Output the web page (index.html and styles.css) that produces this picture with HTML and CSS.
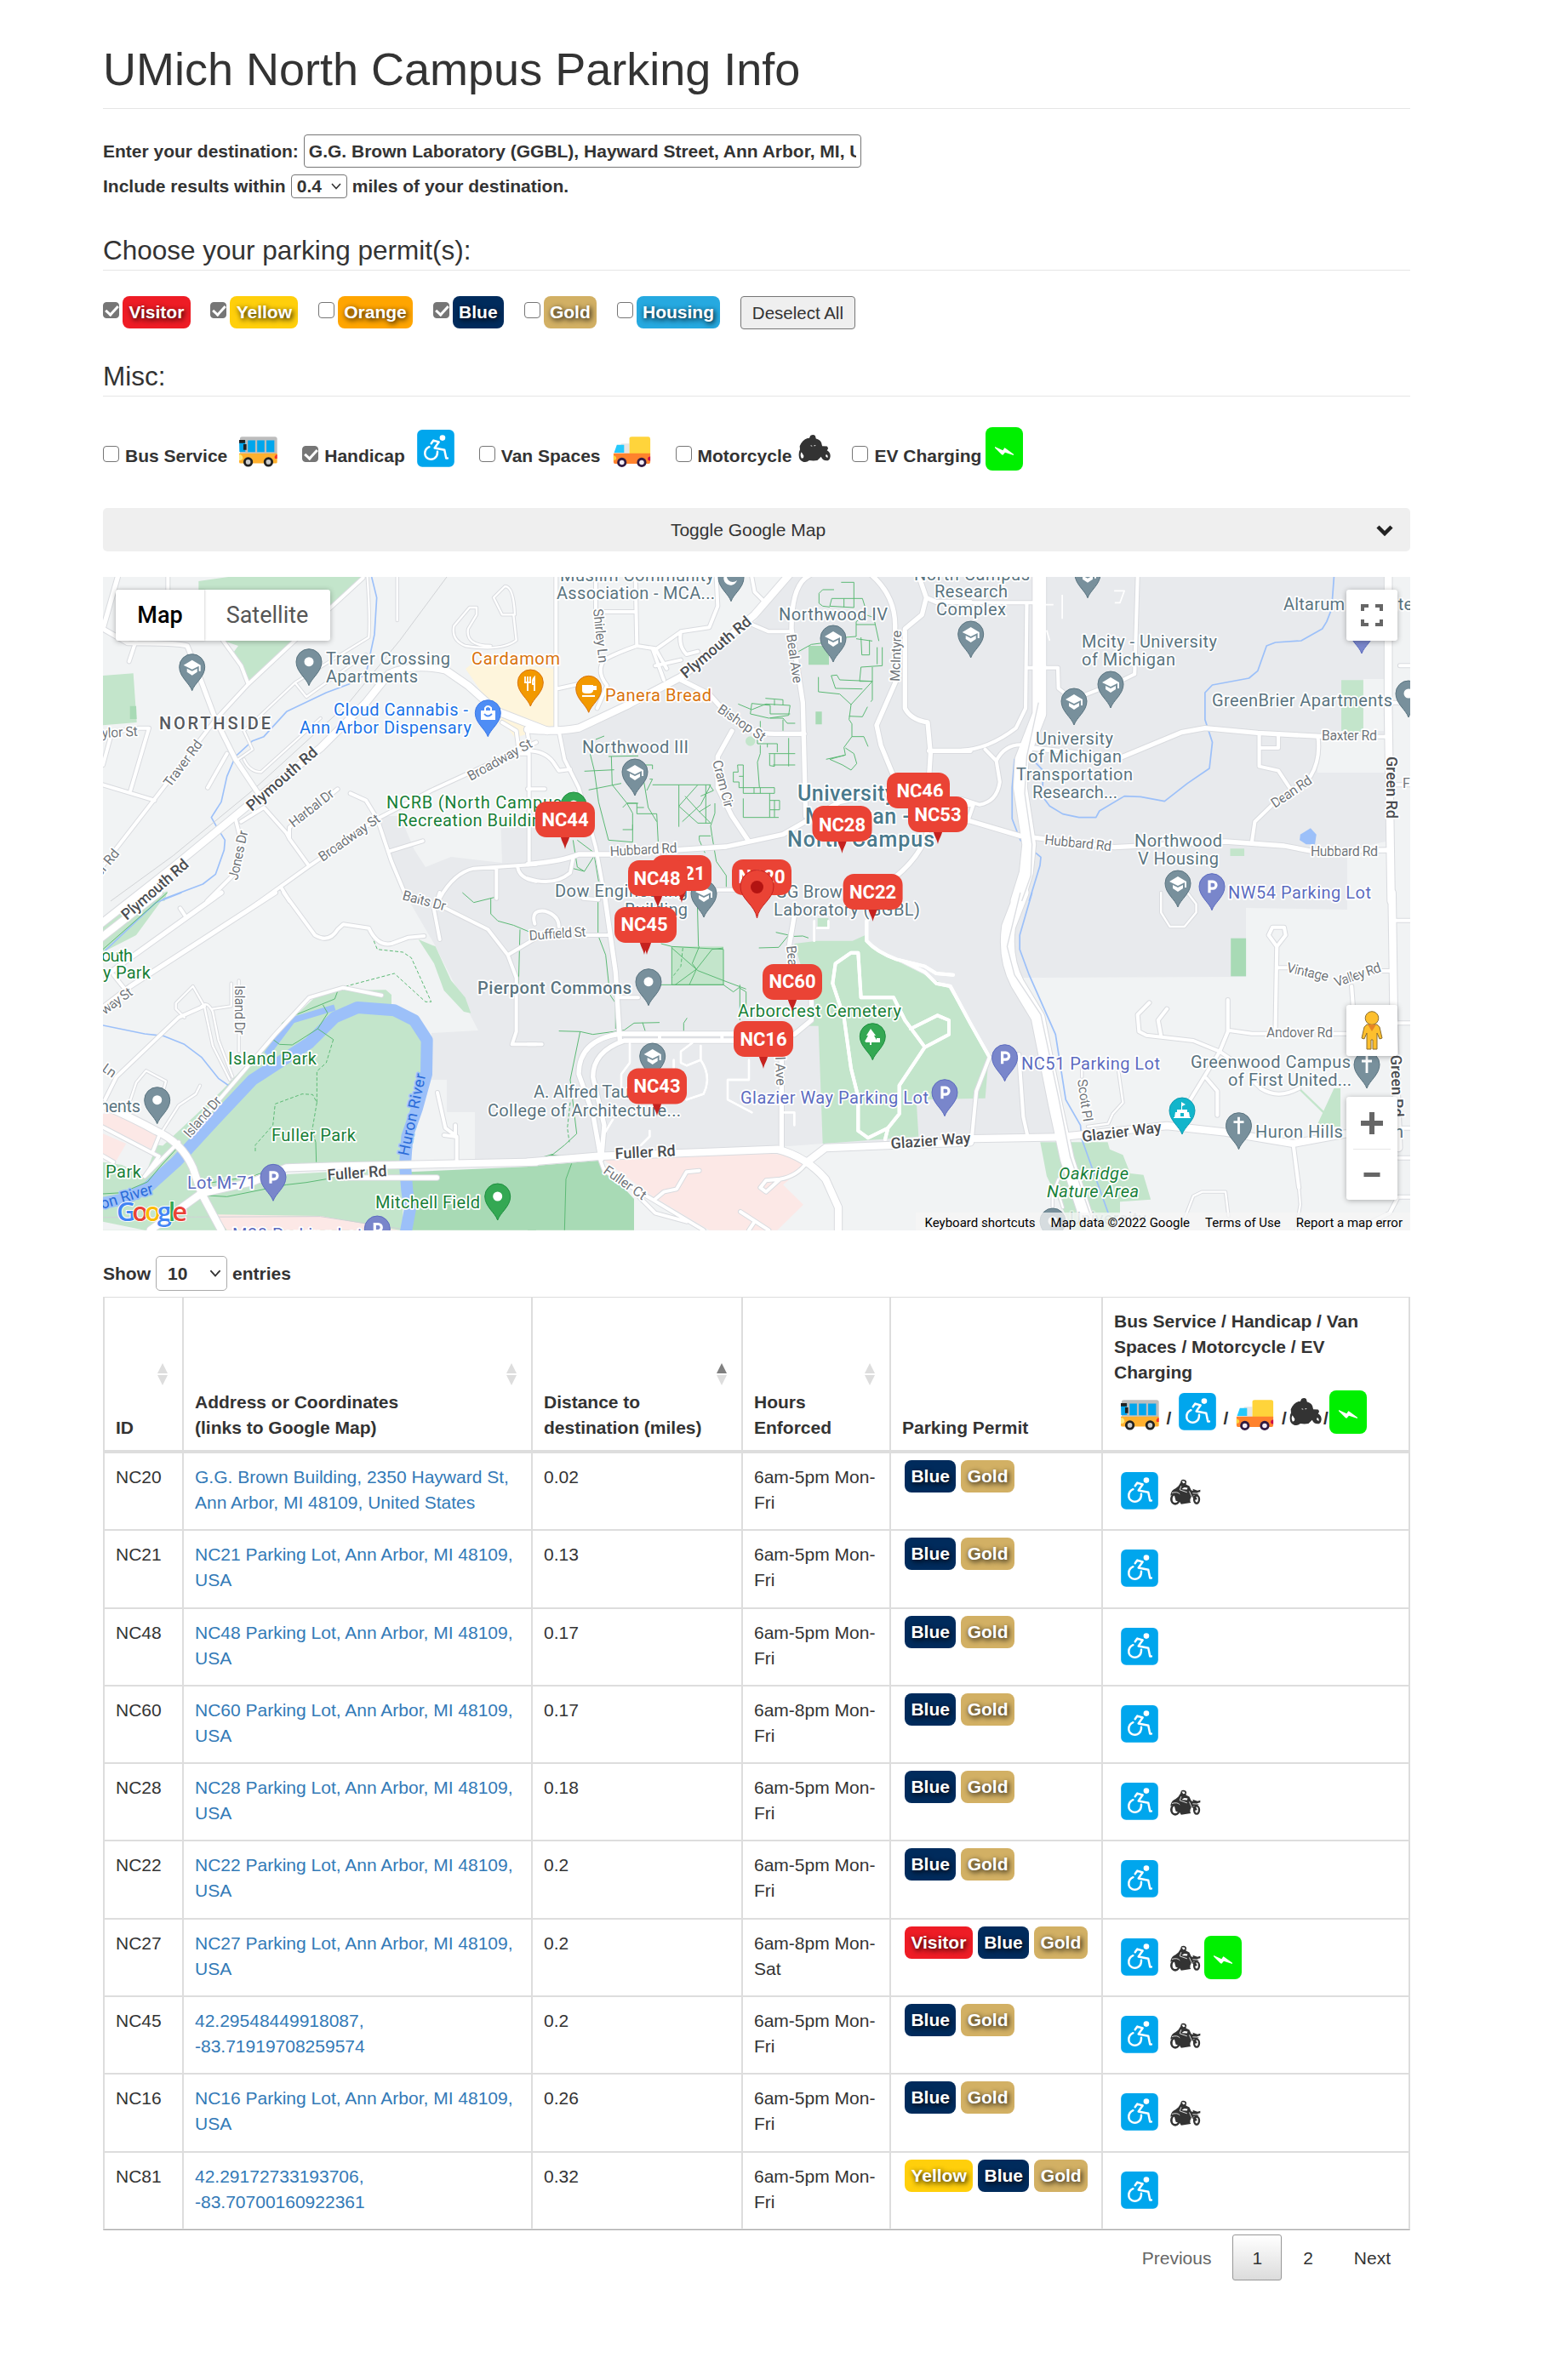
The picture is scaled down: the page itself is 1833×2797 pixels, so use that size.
FILE: index.html
```html
<!DOCTYPE html>
<html lang="en">
<head>
<meta charset="utf-8">
<title>UMich North Campus Parking Info</title>
<link rel="stylesheet" href="styles.css">
</head>
<body>
<svg class="defs" width="0" height="0" aria-hidden="true">
  <symbol id="bus" viewBox="33 53 136 108"><path fill="#bdbdbd" d="M36 112V60q0-7 8-7h116q8 0 8 8v52z"/><path fill="#ffb02e" d="M33 112h135v32q0 4-5 4H38q-5 0-5-5z"/><path fill="#00a6ed" d="M33 66h22v41H34zM64 66h26v42H64zM97 66h26v42H97zM130 66h28v42h-28z"/><path fill="#212121" d="M33 65h21v11H33zM48 80h11v20H48z"/><path fill="#ffe97a" d="M33 117h6q7 5 7 12t-8 8h-5z"/><path fill="#f8312f" d="M168 117h-4q-7 7-4 14h8z"/><circle cx="65" cy="143" r="17" fill="#212121"/><circle cx="137" cy="143" r="17" fill="#212121"/><circle cx="65" cy="143" r="8.500" fill="#ccc"/><circle cx="137" cy="143" r="8.500" fill="#ccc"/></symbol>
  <symbol id="access" viewBox="237 27 132 133"><rect x="237" y="27" width="132" height="132" rx="18" fill="#00a6ed"/><circle cx="327" cy="56" r="10" fill="#fff"/><path fill="none" stroke="#fff" stroke-width="7.500" stroke-linecap="round" stroke-linejoin="round" d="M287 76l8-11 19 6-15 21q20 4 35 7l6 29h5M280 88c-20 9-20 35-3 42 17 7 33-5 32-25"/></symbol>
  <symbol id="van" viewBox="440 50 134 110"><path fill="#e6e6e6" d="M470 75h28v38h-55z"/><path fill="#26c9fc" d="M453 80h26v28h-36z"/><path fill="#ffd43b" d="M498 58q0-7 8-7h60q7 0 7 8v54h-75z"/><path fill="#ff822d" d="M441 110h132v32q0 6-6 6H446q-5 0-5-6z"/><path fill="#fcd53f" d="M441 118q10 3 10 10t-10 7z"/><path fill="#ca0b4a" d="M573 122q-9 1-9 8t9 7z"/><circle cx="471" cy="143" r="17" fill="#321b41"/><circle cx="542" cy="143" r="17" fill="#321b41"/><circle cx="471" cy="143" r="8.500" fill="#f3eef8"/><circle cx="542" cy="143" r="8.500" fill="#f3eef8"/></symbol>
  <symbol id="moto-bold" viewBox="627 47 115 100"><path fill="#333" d="M666 59l4-9q10-6 17 0l3 11q14 4 19 14l3 12 17 1q4 3 4 8l-4 6q13 7 12 22-2 15-14 15-13 0-19-14l-13 13q-14 3-29 0-10 9-22 5-15-6-15-22-1-13 4-22l-1-12q9-22 28-28z"/><path fill="#fff" d="M638 108q-6 10 0 22 9 2 8-9zM671 83l7 4-6 1zM683 83l7 2-6 3zM726 117q7 2 6 11-5 1-8-5z"/></symbol>
  <symbol id="moto" viewBox="205 329 112 95"><path fill="#333" d="M245 341q0-10 9-11 11 0 12 9l-2 9 12 6 7 15 7 1-2-6 17 6 10-3v7l-12 3 8 5-10 4-12 2-10 12 2 13-34 5-8-12-8-22q-12-4-22 4 1-15 11-22 10-5 17-12z"/><g fill="#fff" stroke="#333"><ellipse cx="226" cy="400" rx="14" ry="17" stroke-width="8"/><ellipse cx="302" cy="401" rx="9" ry="14" stroke-width="7"/></g><path fill="#333" d="M222 384q14-2 17 14l-2 10-9-2zM285 390l13-2 6 13-7 2z"/><path fill="#fff" d="M249 336h9l4 6-8 2zM251 362l8-4 11 2-2 6-16-1z"/><path fill="none" stroke="#fff" stroke-width="2.500" d="M247 353l-5 14 26 9M214 378q20-6 28 4M276 372l8 18-4 20M288 379l24 1"/></symbol>
  <symbol id="ev" viewBox="768 18 132 153"><rect x="768" y="18" width="132" height="153" rx="24" fill="#00f000"/><path fill="#fff" d="M801 87l28 13 6-9 3 1 29 21v4l-30-10-8 9-4-1-24-24z"/></symbol>
  <symbol id="sort" viewBox="0 0 12 26"><path class="up" d="M6 0l6 12H0z"/><path class="down" d="M0 14h12l-6 12z"/></symbol>
</svg>

<main class="page">
  <h1>UMich North Campus Parking Info</h1>

  <div class="field destination"><label for="dest">Enter your destination:</label><input id="dest" type="text" value="G.G. Brown Laboratory (GGBL), Hayward Street, Ann Arbor, MI, USA"></div>
  <div class="field radius"><span>Include results within</span><span class="select small">0.4<svg width="12" height="8" viewBox="0 0 12 8"><path d="M1 1l5 5.500L11 1"/></svg></span><span>miles of your destination.</span></div>

  <h2 class="legend">Choose your parking permit(s):</h2>
  <div class="permits">
    <label><input type="checkbox" checked><span class="badge visitor">Visitor</span></label>
    <label><input type="checkbox" checked><span class="badge yellow">Yellow</span></label>
    <label><input type="checkbox"><span class="badge orange">Orange</span></label>
    <label><input type="checkbox" checked><span class="badge blue">Blue</span></label>
    <label><input type="checkbox"><span class="badge gold">Gold</span></label>
    <label><input type="checkbox"><span class="badge housing">Housing</span></label>
    <button class="deselect" type="button">Deselect All</button>
  </div>

  <h2 class="legend misc-title">Misc:</h2>
  <div class="misc">
    <label><input type="checkbox"><span>Bus Service</span><svg class="i-bus"><use href="#bus"/></svg></label>
    <label><input type="checkbox" checked><span>Handicap</span><svg class="i-access"><use href="#access"/></svg></label>
    <label><input type="checkbox"><span>Van Spaces</span><svg class="i-van"><use href="#van"/></svg></label>
    <label class="moto-opt"><input type="checkbox"><span>Motorcycle</span><svg class="i-motob"><use href="#moto-bold"/></svg></label>
    <label class="ev-opt"><input type="checkbox"><span>EV Charging</span><svg class="i-ev"><use href="#ev"/></svg></label>
  </div>

  <button class="toggle" type="button"><span>Toggle Google Map</span><svg width="20" height="14" viewBox="0 0 20 14"><path d="M2 3l8 8 8-8"/></svg></button>

  <section class="map">
    <svg class="canvas" viewBox="121 679 1536 768">
      <defs>
        <path id="drop" d="M0 0C-3-9-15-16-15-28A15 15 0 1 1 15-28C15-16 3-9 0 0Z"/>
        <g id="p-dot"><use href="#drop"/><circle cy="-28" r="5.500" fill="#fff" stroke="none"/></g>
        <g id="p-cap"><use href="#drop"/><path stroke="none" fill="#fff" d="M0-36l-10 6L0-25l8-4v6h2v-7zM-6-26v4l6 4 6-4v-4l-6 3z"/></g>
        <g id="p-park"><use href="#drop"/><path fill="none" stroke="#fff" stroke-width="3.200" d="M-3-20.500V-33.500H1a4 4 0 0 1 0 8H-3"/></g>
        <g id="p-church"><use href="#drop"/><path fill="none" stroke="#fff" stroke-width="2.800" d="M0-38v20M-6-32H6"/></g>
        <g id="flag"><path d="M-6-18C-4-8-1-6 0 0C1-6 4-8 6-18Z" fill="#c5221f"/><rect x="-35" y="-56" width="70" height="42" rx="13" fill="#ea4335"/></g>
        <g id="roads">
          <g transform="translate(110 660) scale(.33333)">
            <path class="w3" d="M85 57L33 240M33 240L120 290Q300 290 330 300L370 400L430 560L500 700L580 820"/>
            <path class="w2" d="M125 355L150 280M262 57V110M455 280L520 370L545 435M950 60L700 290L545 435L430 560L215 840L33 1075M33 610L160 590H195L130 810M60 620L33 720M33 790L215 845M470 680L402 800"/>
            <path class="w4" d="M0 1300L280 1080L560 850L800 660L960 500L1040 400Q1120 360 1240 385L1320 440L1420 530L1600 600"/>
            <path class="w2" d="M500 910L520 990L490 1110L400 1200M520 920L600 870L680 960L690 980L755 1070M690 980L690 940L860 805M560 1220L755 1080L1000 910L1190 810L1560 640M905 820L960 845L1000 910L1050 1060L1100 1180M1040 1025L1160 988M1220 1190Q1270 1100 1340 1085L1560 1070M1420 1080V1190M1535 1060V680H1500L1490 600L1440 570M660 1150L690 1200M1495 1080Q1500 1120 1560 1130"/>
            <path class="w1" d="M965 57Q975 200 970 270L710 430L530 600L560 665L510 700M1070 57V210M1350 165H1325L1270 230Q1260 280 1310 300Q1440 320 1490 280L1480 190H1440L1410 130L1450 90Q1480 90 1485 190M1350 165V190L1320 240Q1310 300 1400 300M710 430L750 480L960 330M530 700Q550 745 590 745L800 555"/>
          </g>
          <g transform="translate(620 660) scale(.33333)">
            <path class="w4" d="M0 595Q100 605 180 590L350 510L540 410L660 310L800 190L930 40"/>
            <path class="w2" d="M110 600L130 700L180 800L210 900L240 1010L275 1200M100 57V600M110 450L200 430M240 57V180M380 57L385 300L450 310L490 380M385 300Q300 330 270 350Q240 390 280 440L245 520M240 180H380M440 310L480 420M455 310L540 250L640 235L670 160L665 57M540 250Q530 300 560 330L600 320M450 370L540 350M790 57L800 110L830 140M780 220L850 250H930"/>
            <path class="w3" d="M540 420L640 470L720 560Q790 610 870 610H975M720 600L670 690V800L720 900L780 990M0 1070Q120 1060 180 1035H290L700 1008L900 965L1100 850L1200 830M980 60Q930 100 930 240L970 500L980 900M980 60L1010 40H1200Q1300 120 1295 240L1300 420L1230 580L1245 650L1290 760V820L1560 860M1380 57L1405 130L1390 190L1330 240V520Q1350 560 1410 570L1420 680L1415 760M1405 130L1440 145H1560M1415 670H1560M1290 1120Q1390 1040 1410 950"/>
            <path class="w2" d="M0 670Q60 670 90 710L110 740L150 735M0 805H60M0 1120Q90 1150 150 1100L160 1050M650 1160H900M0 610L10 670"/>
          </g>
          <g transform="translate(1130 660) scale(.34444 .33333)">
            <path class="w5" d="M265 57V540L205 700L200 800L230 1000L220 1100L190 1200"/>
            <path class="w4" d="M1455 57V520L1465 1200"/>
            <path class="w2" d="M0 148H245M222 150L218 520L185 590Q90 665 0 668M220 377H328L330 450L380 490L550 420L590 400L600 57M80 665L118 705L130 780Q120 850 60 860L0 840M118 705Q150 640 220 650M40 860L20 920M1015 610V725L1080 740L1125 810M1080 615V660H1015M1215 620Q1225 700 1190 760L1060 860L1000 920L990 990M1420 620H1455M1495 370H1530M1440 500H1530M1460 790H1530"/>
            <path class="w3" d="M20 915L200 970L520 1010L900 990L1100 1005L1200 1025L1455 1020M240 660L540 695L750 605L830 590L1010 607L1240 620"/>
          </g>
          <g transform="translate(110 1050) scale(.33333)">
            <path class="w4" d="M0 180L230 0M200 1190L380 1060L560 1020L680 970L840 965L1560 950M0 735Q130 790 220 840Q310 880 350 970L380 1060L450 1190"/>
            <path class="w3" d="M60 280L450 0M0 430L130 330L640 0M870 1005H1210"/>
            <path class="w2" d="M40 730L80 650L300 440L390 400M305 55L325 85M670 0L780 150Q830 180 860 130L880 112L970 125Q1000 190 1050 180L1110 158L1165 153M340 850L640 500L760 370L880 335L1015 362M70 290L110 340M1220 0L1200 60L1220 165M1240 55L1390 130L1460 220L1490 300V490L1475 535H1560M1460 220L1560 160M1212 705L1240 830L1280 860V945M1275 820V860L1235 855M0 810L230 930M230 860L210 910M230 930L180 1000M300 880L180 1000M0 910L70 950"/>
            <path class="w1" d="M390 400L350 330L290 390V410L320 440M380 400Q400 380 420 420L440 520L490 650M390 400L420 540L480 660M420 410L485 400V320M512 310V560M130 730L150 670L185 628L255 665L240 720M375 680L360 710L300 750L230 860"/>
          </g>
          <g transform="translate(620 1050) scale(.33333)">
            <path class="w3" d="M270 0L310 280L325 520M740 498H325Q180 520 180 640L230 780L255 920M740 522H340Q230 560 230 650L270 820L260 940M940 80L920 200M1000 380V450L940 500M895 580V900"/>
            <path class="w4" d="M0 950L240 930L880 905Q980 930 1050 1010L1095 1110V1190M985 950L1050 900L1560 880"/>
            <path class="w2" d="M205 150H290M25 110Q10 60 60 65Q110 80 110 120M195 20L250 25M325 370H390M465 500V520M685 500V520M0 535H50M255 940L270 980L420 1070L620 1190M380 1060L450 1130L560 1160M450 1080L480 1055L525 1045L560 985L605 980M985 950Q950 1000 890 1010L840 1055L820 1040L840 1015L890 1010M750 1125L850 1190M800 1160L780 1190"/>
            <path class="w2 plain" d="M1195 100V170Q1230 210 1300 235L1400 260L1440 285L1500 290M1320 240L1400 280L1440 320L1490 330L1560 460L1625 575M1115 440L1075 320L1085 250L1140 212H1165L1175 370H1290L1330 450L1400 545L1310 680V780L1270 830L1200 865L1165 840V720L1140 620L1115 440M1350 480L1445 433L1485 450V500L1400 545M1270 830L1260 870"/>
            <path class="w1 plain" d="M360 530V600L330 640V700M580 530L540 560V600L560 610L610 590V540M610 590Q650 650 620 710L560 730M780 590V660H705V730L790 775M905 775H940V820M430 840V860L400 890M300 800L270 850M1010 100V170M1020 125H1060V100M515 590V620M950 1010"/>
          </g>
          <g transform="translate(1130 1050) scale(.34444 .33333)">
            <path class="w5" d="M205 0L160 120Q145 230 190 320L260 440L320 750L360 940L420 1130L450 1190"/>
            <path class="w4" d="M1468 0L1475 500L1490 900M0 868L330 862M350 860L700 822L900 845L1130 885L1310 850"/>
            <path class="w2" d="M1480 98H1530M1075 190L1047 150L1060 122H1100L1105 150L1075 190L1070 480M1075 265H1110M1435 276H1465M1330 330L1335 400M640 388L600 430L605 490L630 503L790 522L880 560L950 610M700 410L670 450L680 505M908 378V490L880 560L780 730M835 655L872 700V785M908 485L990 497H1040M1265 497H1320M990 660L1020 690Q1080 730 1150 690M1132 895L1150 1040M1490 460H1530M1490 935H1530M1490 1073H1530M1485 1080L1460 1130L1400 1160M1490 830H1530M95 580L50 700L35 860M195 570L210 790L225 860"/>
            <path class="w1" d="M680 0V70L710 120H760L800 70V40L770 0M535 630L550 740L515 780L500 815L430 825M410 620V650M1150 1040L1155 1100L1140 1190M760 1150L790 1070L820 1055H900L910 1140M330 1010L310 1060V1110M330 1060L345 1110M1530 1130"/>
          </g>
        </g>
      </defs>

      <rect class="land" x="121" y="679" width="1536" height="768"/>
      <path class="campus" d="M657 860L750 830L800 800L880 740L930 679H1628V990L1583 1000V1070L1464 1068V1149L1202 1150L1250 1340L967 1345L700 1365H558V1308H525V1270H507V1215L562 1212L547 1183L510 1110L475 1050L443 960H470L487 1000L500 1020L530 1008L590 1015L588 960L690 950L665 900Z"/>
      <path class="land" d="M1602 799H1626V860H1602ZM1548 866H1628V909H1548Z"/>
      <path class="yellow-land" d="M547 787L560 777L653 787V853L605 868L573 825Z"/>
      <g transform="translate(110 660) scale(.33333)">
        <path class="park" d="M370 72L475 57H945L545 430L520 375L495 320L510 300L450 280H370ZM33 405L140 397L152 570L33 580ZM200 1190L260 1165L250 1200Z"/>
        <path class="park-d" d="M128 512H150L152 558H128Z"/>
        <path class="creek" d="M980 57L998 130L990 260L960 400L900 435L820 465L680 532L600 620L560 635L500 690L470 760L450 850L415 905L435 940L463 985L460 1020L430 1105L385 1140L240 1195"/>
        <path class="rail" d="M1245 57L1080 280L900 500L560 810L280 1040L60 1200"/>
      </g>
      <g transform="translate(620 660) scale(.33333)">
        <path class="park-d" d="M990 300H1062V367H990ZM1015 532H1037V577H1015Z"/><circle class="park" cx="785" cy="636" r="17"/>
        <path class="path" d="M1105 76H1150V165L1065 160L1072 133H1180L1190 165M1115 133V165M1080 102H1040L1027 115V150L1040 160L1065 163M955 320L1000 295L1040 290M1120 270L1158 267V215L1190 190L1220 200L1238 283M1158 225H1225M1175 270L1178 332H1205V280M1158 275L1215 283M1250 305V370L1175 375L1170 425H1215M1232 305V365M1215 375V490L1210 497M1025 410V462L1100 470L1140 507L1215 425M1070 405L1085 450L1180 452M1070 405L1090 403L1100 420L1215 425M1140 507L1133 560L1143 575V620H1185L1200 655M1133 548L1180 550L1198 515M1143 620L1115 658L1120 685L1065 700L1110 720L1140 738L1160 715L1150 680L1120 660M1052 700L1120 685M742 505L790 525L840 505L925 510L920 545L850 555L785 540L790 503L855 510V540H925M838 485L900 490V510M870 510V490M855 555L900 555L915 573H943M900 560V620M820 565V590M810 625V645H880V675M820 650V680L810 710L817 800M845 645V658M920 625V725M850 680H943M853 682V722L870 725V680M865 720H943M740 720H760V820H870V800H745V780H725V745H742ZM760 760H745M798 800V820M820 800V820M760 838V905H885M853 820V905M853 845H888V878H855M870 845V905"/>
        <path class="path" d="M270 618L240 630M220 680L235 740L250 850L285 985L370 992V890L350 855H385V892H455L460 990M200 742L305 737M295 690L298 790L350 855M215 808L330 785M285 690L390 688M410 720H440V735M410 780L425 870L455 920M420 810L440 770H430M440 790H645L610 860L545 920M533 790V938M555 830L605 885L645 925H600L533 865L600 790M628 790V925M645 860L605 885M640 790L655 810L610 830M660 855V890L645 935L650 970L665 1060L700 1110V1150M645 970H605V985L625 1030M390 855H350L335 870M385 870H410M335 948H370V930M160 985L175 1080L200 1095L235 1040M175 985L235 1030M235 1040L250 1130M160 1085L200 1095"/>
      </g>
      <g transform="translate(1130 660) scale(.34444 .33333)">
        <path class="park" d="M1295 421H1370V603H1295ZM916 1015H964V1041H916Z"/>
        <path class="water" d="M1155 965L1190 943L1210 965L1205 1000L1175 1000L1153 985Z"/>
        <path class="creek" d="M1270 57L1262 170L1245 215L1230 240L1158 282L1070 288L1040 300L1010 388L980 414L855 438L830 465V560L855 640L845 732L770 785L692 848L610 832L555 830L470 882L458 905H400L345 893L300 865L275 830L278 740L250 710L205 680L180 700L172 800V910L200 985L270 1045L267 1075L230 1200"/>
      </g>
      <g transform="translate(110 1050) scale(.33333)">
        <path class="park" d="M33 100L200 0H260L150 150L33 210ZM150 980L450 700L640 500L780 370L860 345L1030 343L1050 360V400L1120 440L1170 500L1190 600L1120 800L1090 945L400 1010ZM33 950L230 890L290 900L400 1010L1090 970V1190H33ZM1145 165L1205 190L1260 310L1310 370L1330 425L1305 420L1235 345L1200 250Z"/>
        <path class="park-d" d="M1110 985L1560 965V1190H1115Z"/>
        <path class="land" d="M33 830L115 800L240 850L215 910L180 1000L100 960L33 950ZM33 1160L180 1190H33Z"/>
        <path class="pink" d="M33 780H80L230 860L205 905L33 820ZM33 850L115 885L80 945L33 925ZM430 1135L800 1140L1080 1190H470Z"/>
        <path class="river" d="M33 1095L110 1080L190 1040L290 950L400 830L560 660L760 530L850 440L930 405L1060 415L1130 450L1175 520L1173 640L1140 760L1105 860L1098 960L1105 1050L1115 1120L1100 1200"/>
        <path class="river thin" d="M610 570L700 450L850 405"/>
        <path class="creek" d="M310 0L220 35L40 205M33 468L180 498L245 505L320 535L380 580L440 655L490 690"/>
        <path class="rail" d="M33 1145L800 1142L1080 1185"/>
        <path class="path" d="M260 0L33 200M625 512L655 490L665 460L690 440L850 375L860 348M808 395L825 425L790 480L845 518M790 480L720 525L700 537L655 535L625 512M33 1062L100 1058L190 1020L240 960L290 905M400 1068L470 1072L680 1030L750 1022L820 1010M400 1025L560 1000L660 965L1230 948M785 950L783 880M1300 0L1340 35L1420 15M1400 20V75L1425 100L1480 115L1540 140M1503 130L1498 320"/>
        <path class="path dash" d="M973 135L1000 200L1090 210L1120 230L1190 385H1170L1060 285L890 330M845 518L820 600L787 630V740L772 712L735 710L640 745L632 820L570 890V915M787 740L770 840L783 880"/>
      </g>
      <g transform="translate(620 1050) scale(.33333)">
        <path class="park" d="M940 180L1020 170H1145L1190 150L1200 180L1280 230L1420 300L1480 330L1530 410L1625 580L1613 725L1370 730L1378 860L1040 885L1025 470H990L1000 380ZM508 190H690L692 325H508ZM1022 90H1060V120H1022Z"/>
        <path class="park-d" d="M0 965L250 945L375 1080V1190H0Z"/>
        <path class="pink" d="M265 940L780 912L900 925L985 960L900 1030L972 1100L880 1190H640L440 1070Z"/>
        <path class="path" d="M248 20V150L275 220L290 360L310 390V480M598 30L602 190M508 190L690 200V325H508ZM508 195L600 275L690 310L770 340M520 325L595 270L650 200L690 195M570 325L595 270L580 250L605 190M470 180L508 190M470 325H690L725 350L745 335L770 350V440M748 325V450M110 488L185 490L230 500L340 485L375 460L465 458M405 458L415 490M550 490V460L562 442M185 490L150 660L173 850L130 890L90 922L45 935M80 925L140 930M155 955L135 1010L130 1190M815 195L885 193L920 150L875 140M920 155L970 153L990 160"/>
        <path class="path dash" d="M150 740L140 830L147 880M547 195L540 260L508 300"/>
      </g>
      <g transform="translate(1130 1050) scale(.34444 .33333)">
        <path class="park-d" d="M918 161H970V295H918Z"/>
        <path class="park" d="M268 880H498L505 905L550 925L575 990L620 995L645 1082L540 1090V1130L500 1190H380L290 1000ZM1270 690H1292V825H1210Z"/>
        <path class="trail" d="M1150 690L1235 775"/>
        <path class="creek" d="M240 0L198 150V200L230 290L320 500L355 730L405 820L410 870L500 1130"/>
      </g>
      <use class="casing" href="#roads"/>
      <use class="fill" href="#roads"/>
      <g transform="translate(1130 660) scale(.34444 .33333)"><path class="median" d="M262 500L222 690L215 820L240 1000L236 1110L205 1200"/><path class="lane" d="M343 120V205M285 155H313M520 106H555L540 148H522M290 245L300 282"/></g>
      <g transform="translate(1130 1050) scale(.34444 .33333)"><path class="median" d="M200 0L155 190L180 290L270 430L330 720L370 930L440 1140"/></g>

      <g class="lbl poi">
        <text x="383" y="782" textLength="146">Traver Crossing</text><text x="383" y="803" textLength="108">Apartments</text>
        <text class="orange" x="554" y="782" textLength="104">Cardamom</text>
        <text class="orange" x="711" y="825" textLength="125">Panera Bread</text>
        <text class="azure" x="392" y="842" textLength="158">Cloud Cannabis -</text><text class="azure" x="352" y="863" textLength="202">Ann Arbor Dispensary</text>
        <text class="green" x="454" y="951" textLength="206">NCRB (North Campus</text><text class="green" x="467" y="972" textLength="188">Recreation Building)</text>
        <text x="658" y="684" textLength="181">Muslim Community</text><text x="654" y="705" textLength="186">Association - MCA...</text>
        <text x="915" y="730" textLength="128">Northwood IV</text><text x="684" y="886" textLength="125">Northwood III</text>
        <text x="1074" y="683" textLength="136">North Campus</text><text x="1098" y="703" textLength="86">Research</text><text x="1100" y="724" textLength="82">Complex</text>
        <text x="1271" y="762" textLength="159">Mcity - University</text><text x="1271" y="783" textLength="110">of Michigan</text>
        <text x="1508" y="718" textLength="152">Altarum Institute</text>
        <text x="1424" y="831" textLength="212">GreenBrier Apartments</text>
        <text x="1217" y="876" textLength="91">University</text><text x="1208" y="897" textLength="110">of Michigan</text><text x="1194" y="918" textLength="137">Transportation</text><text x="1213" y="939" textLength="100">Research...</text>
        <text x="1333" y="996" textLength="103">Northwood</text><text x="1337" y="1017" textLength="95">V Housing</text>
        <text class="violet" x="1443" y="1057" textLength="168">NW54 Parking Lot</text>
        <text x="652" y="1055" textLength="156">Dow Engineering</text><text x="734" y="1077" textLength="74">Building</text>
        <text x="911" y="1056" textLength="90">GG Brown</text><text x="909" y="1077" textLength="172">Laboratory (GGBL)</text>
        <text class="med" x="561" y="1169" textLength="181">Pierpont Commons</text>
        <text class="green" x="867" y="1196" textLength="192">Arborcrest Cemetery</text>
        <text class="violet" x="870" y="1298" textLength="221">Glazier Way Parking Lot</text>
        <text x="627" y="1291" textLength="163">A. Alfred Taubman</text><text x="573" y="1313" textLength="227">College of Architecture...</text>
        <text class="green" x="268" y="1252" textLength="104">Island Park</text><text class="green" x="319" y="1342" textLength="99">Fuller Park</text><text class="green" x="441" y="1421" textLength="123">Mitchell Field</text>
        <text class="green" x="119" y="1131" textLength="37">outh</text><text class="green" x="121" y="1151" textLength="56">y Park</text><text class="green" x="124" y="1385" textLength="42">Park</text>
        <text x="117" y="1308" textLength="48">nents</text>
        <text class="violet" x="220" y="1398" textLength="81">Lot M-71</text><text class="violet" x="273" y="1459" textLength="153">M28 Parking Lot</text>
        <text class="violet" x="1200" y="1258" textLength="163">NC51 Parking Lot</text>
        <text x="1399" y="1256" textLength="188">Greenwood Campus</text><text x="1443" y="1277" textLength="145">of First United...</text>
        <text x="1475" y="1338" textLength="174">Huron Hills Church</text>
        <text class="green it" x="1244" y="1387" textLength="82">Oakridge</text><text class="green it" x="1230" y="1408" textLength="108">Nature Area</text>
        <text x="1257" y="1440" textLength="90" opacity=".4">University</text>
      </g>
      <g class="lbl area"><text x="187" y="858" textLength="131">NORTHSIDE</text></g>
      <g class="lbl univ"><text x="937" y="942" textLength="146">University of</text><text x="946" y="969" textLength="123">Michigan -</text><text x="925" y="996" textLength="173">North Campus</text></g>
      <g class="lbl road">
        <text x="120" y="868" textLength="42" transform="rotate(-3 120 868)">ylor St</text>
        <text transform="translate(200 927) rotate(-53)" textLength="64">Traver Rd</text>
        <text transform="translate(118 1032) rotate(-50)" textLength="36">er Rd</text>
        <text transform="translate(345 974) rotate(-38)" textLength="62">Harbal Dr</text>
        <text transform="translate(379 1014) rotate(-35)" textLength="84">Broadway St</text>
        <text transform="translate(553 919) rotate(-29)" textLength="84">Broadway St</text>
        <text transform="translate(279 1036) rotate(-78)" textLength="59">Jones Dr</text>
        <text transform="translate(472 1058) rotate(15)" textLength="52">Baits Dr</text>
        <text transform="translate(123 1194) rotate(-36)" textLength="42">way St</text>
        <text transform="translate(119 1259) rotate(35)" textLength="16">Ln</text>
        <text transform="translate(276 1159) rotate(90)" textLength="58">Island Dr</text>
        <text transform="translate(223 1339) rotate(-49)" textLength="58">Island Dr</text>
        <text transform="translate(697 717) rotate(84)" textLength="64">Shirley Ln</text>
        <text transform="translate(842 837) rotate(34)" textLength="64">Bishop St</text>
        <text transform="translate(837 896) rotate(75)" textLength="57">Cram Cir</text>
        <text transform="translate(924 747) rotate(82)" textLength="58">Beal Ave</text>
        <text transform="translate(1057 802) rotate(-88)" textLength="60">McIntyre</text>
        <text transform="translate(717 1007) rotate(-3)" textLength="79">Hubbard Rd</text>
        <text transform="translate(1227 993) rotate(6)" textLength="79">Hubbard Rd</text>
        <text x="1540" y="1007" textLength="79">Hubbard Rd</text>
        <text x="1553" y="871" textLength="65">Baxter Rd</text>
        <text transform="translate(1498 951) rotate(-34)" textLength="54">Dean Rd</text>
        <text x="1648" y="927">F</text>
        <text transform="translate(622 1106) rotate(-4)" textLength="67">Duffield St</text>
        <text transform="translate(924 1113) rotate(84)" textLength="24">Bea</text>
        <text transform="translate(911 1243) rotate(88)" textLength="34">l Ave</text>
        <text transform="translate(708 1379) rotate(35)" textLength="57">Fuller Ct</text>
        <text transform="translate(1511 1143) rotate(13)" textLength="50">Vintage</text><text transform="translate(1570 1161) rotate(-19)" textLength="57">Valley Rd</text>
        <text x="1488" y="1220" textLength="78">Andover Rd</text>
        <text transform="translate(1266 1270) rotate(82)" textLength="50">Scott Pl</text>
      </g>
      <g class="lbl road major">
        <text transform="translate(296 955) rotate(-41)" textLength="104">Plymouth Rd</text>
        <text transform="translate(149 1083) rotate(-41)" textLength="98">Plymouth Rd</text>
        <text transform="translate(806 799) rotate(-40)" textLength="102">Plymouth Rd</text>
        <text transform="translate(385 1388) rotate(-4)" textLength="70">Fuller Rd</text>
        <text transform="translate(723 1363) rotate(-3)" textLength="71">Fuller Rd</text>
        <text transform="translate(1047 1351) rotate(-4)" textLength="94">Glazier Way</text>
        <text transform="translate(1272 1343) rotate(-7)" textLength="94">Glazier Way</text>
        <text transform="translate(1629 890) rotate(90)" textLength="73">Green Rd</text>
        <text transform="translate(1634 1241) rotate(88)" textLength="73">Green Rd</text>
      </g>
      <g class="riverlbl">
        <text transform="translate(480 1360) rotate(-78)" textLength="98">Huron River</text>
        <text transform="translate(120 1422) rotate(-17)" textLength="64">on River</text>
      </g>

      <g class="pins">
        <g class="slate"><use href="#p-cap" x="225.700" y="812.700"/><use href="#p-cap" x="979" y="779"/><use href="#p-cap" x="746" y="936"/><use href="#p-cap" x="1140.700" y="774"/><use href="#p-cap" x="1278" y="703.700"/><use href="#p-cap" x="1305" y="833"/><use href="#p-cap" x="1262" y="853"/><use href="#p-cap" x="1384" y="1067"/><use href="#p-cap" x="827" y="1079"/><use href="#p-cap" x="766.700" y="1270"/>
          <use href="#p-dot" x="363" y="806.700"/><use href="#p-dot" x="762" y="1182.700"/><use href="#p-dot" x="184.700" y="1321.700"/><use href="#p-dot" x="1655" y="844"/><use href="#p-dot" x="1237" y="1464"/>
          <use href="#p-church" x="1455.500" y="1351.700"/><use href="#p-church" x="1606" y="1280"/>
          <use href="#drop" x="859" y="707.700"/><path d="M856 673a8 8 0 1 0 10 10a7 7 0 0 1-10-10z" fill="#fff" stroke="none"/></g>
        <g class="leaf"><use href="#p-dot" x="584.700" y="1435"/><use href="#p-dot" x="674" y="975"/><use href="#drop" x="1025.300" y="1246.700"/><path d="M1023 1210l6 8h-2l4 7h-7v4h-2v-4h-6l4-7h-2zM1017 1224h17v2h-17zM1030 1221h4v5h-4z" fill="#fff" stroke="none"/></g>
        <g class="amber"><use href="#drop" x="623.300" y="831"/><path d="M617 796v8M620 796v8M623 796v8M616 803h8M620 804v9M628 813V797q-3 3-2 8h2" fill="none" stroke="#fff" stroke-width="1.800"/><use href="#drop" x="691.700" y="838.300"/><path d="M684 806h13v7q-1 3-5 3h-3q-5 0-5-3zM697 807h4v5h-4M684 818h15v2h-15z" fill="#fff" stroke="none"/></g>
        <g class="shop"><use href="#drop" x="573.300" y="866.700"/><path d="M565 836h17v11h-17z" fill="#fff" stroke="none"/><path d="M570 836v-3q3-4 7 0v3" fill="none" stroke="#fff" stroke-width="2"/><path d="M569 840q4 5 9 0" fill="none" stroke="#4e8df5" stroke-width="1.800"/></g>
        <g class="lot"><use href="#p-park" x="1424" y="1070.700"/><use href="#p-park" x="1180.600" y="1271.700"/><use href="#p-park" x="1110" y="1312.700"/><use href="#p-park" x="321" y="1412.300"/><use href="#p-park" x="443.300" y="1473"/><use href="#drop" x="1600" y="769"/></g>
        <g class="teal"><use href="#drop" x="1389" y="1334"/><path d="M1388 1296l5 3-4 2v4h6v3h2l1 6h1v1h-20v-1h1l1-6h2v-3h5z" fill="#fff" stroke="none"/><path d="M1387 1309h4v4h-4z" stroke="none"/></g>
      </g>

      <g class="flags">
        <use href="#flag" x="664" y="999"/><text x="664" y="971.500">NC44</text>
        <use href="#flag" x="1077" y="965"/><use href="#flag" x="1081" y="965"/><text x="1081" y="938">NC46</text>
        <use href="#flag" x="1102" y="993"/><text x="1102" y="966">NC53</text>
        <use href="#flag" x="989.500" y="1004"/><text x="989.500" y="977.500">NC28</text>
        <use href="#flag" x="801" y="1062"/><text x="801" y="1035">NC21</text>
        <use href="#flag" x="773" y="1068"/><text x="772" y="1040.500">NC48</text>
        <use href="#flag" x="895" y="1067"/><text x="895" y="1038.500">NC20</text>
        <use href="#flag" x="1025.600" y="1084"/><text x="1025.600" y="1057">NC22</text>
        <use href="#flag" x="760" y="1123"/><use href="#flag" x="757" y="1123"/><text x="757" y="1095">NC45</text>
        <use href="#flag" x="931" y="1190"/><text x="931" y="1162">NC60</text>
        <use href="#flag" x="897" y="1257"/><text x="897" y="1229.500">NC16</text>
        <use href="#flag" x="772" y="1312.500"/><text x="772" y="1285">NC43</text>
      </g>
      <path d="M889.500 1080C887 1064 870 1058 870 1043A19.500 19.500 0 0 1 909 1043C909 1058 892 1064 889.500 1080Z" fill="#ea4335" stroke="#c5221f"/><circle cx="889.500" cy="1043.500" r="7.500" fill="#b31412"/>
      <text class="logo" x="137" y="1436" textLength="83"><tspan fill="#4285f4">G</tspan><tspan fill="#ea4335">o</tspan><tspan fill="#fbbc04">o</tspan><tspan fill="#4285f4">g</tspan><tspan fill="#34a853">l</tspan><tspan fill="#ea4335">e</tspan></text>
    </svg>
    <div class="maptype"><span class="on">Map</span><span>Satellite</span></div>
    <div class="ctl full"><svg width="28" height="28" viewBox="0 0 28 28"><path d="M3 9V3h7M18 3h7v6M25 19v6h-7M10 25H3v-6"/></svg></div>
    <div class="ctl pegman"><svg width="26" height="46" viewBox="0 0 26 46"><g fill="#fdbf2d" stroke="#8a6d2f" stroke-width="1"><path d="M7 16h12l3 3 3 13-3 1-3-7v19h-5V34h-2v11H7V26l-3 7-3-1 3-13z"/><circle cx="13" cy="8.500" r="7.800"/></g><path fill="#e58426" d="M8 16h10l-5 8z"/></svg></div>
    <div class="ctl zoom"><svg width="60" height="60" viewBox="0 0 60 60"><path d="M17 30h26M30 17v26"/></svg><svg width="60" height="60" viewBox="0 0 60 60"><path d="M17 30h26"/></svg></div>
    <div class="credits"><span>Keyboard shortcuts</span><span>Map data ©2022 Google</span><span>Terms of Use</span><span>Report a map error</span></div>
  </section>

  <div class="length"><span>Show</span><span class="select big">10<svg width="14" height="9" viewBox="0 0 12 8"><path d="M1 1l5 5.500L11 1"/></svg></span><span>entries</span></div>

  <table>
    <colgroup><col class="c1"><col class="c2"><col class="c3"><col class="c4"><col class="c5"><col class="c6"></colgroup>
    <thead><tr>
      <th>ID<svg class="sort"><use href="#sort"/></svg></th>
      <th>Address or Coordinates<br>(links to Google Map)<svg class="sort"><use href="#sort"/></svg></th>
      <th>Distance to<br>destination (miles)<svg class="sort asc"><use href="#sort"/></svg></th>
      <th>Hours<br>Enforced<svg class="sort"><use href="#sort"/></svg></th>
      <th>Parking Permit</th>
      <th>Bus Service / Handicap / Van Spaces / Motorcycle / EV Charging
        <div class="key"><svg class="i-bus"><use href="#bus"/></svg><i>/</i><svg class="i-access"><use href="#access"/></svg><i>/</i><svg class="i-van"><use href="#van"/></svg><i>/</i><svg class="i-motob"><use href="#moto-bold"/></svg><i>/</i><svg class="i-ev"><use href="#ev"/></svg></div></th>
    </tr></thead>
    <tbody>
      <tr><td>NC20</td><td><a>G.G. Brown Building, 2350 Hayward St, Ann Arbor, MI 48109, United States</a></td><td>0.02</td><td>6am-5pm Mon-Fri</td><td><div class="tags"><span class="badge blue">Blue</span><span class="badge gold">Gold</span></div></td><td><div class="icons"><svg class="i-access"><use href="#access"/></svg><svg class="i-moto"><use href="#moto"/></svg></div></td></tr>
      <tr><td>NC21</td><td><a>NC21 Parking Lot, Ann Arbor, MI 48109, USA</a></td><td>0.13</td><td>6am-5pm Mon-Fri</td><td><div class="tags"><span class="badge blue">Blue</span><span class="badge gold">Gold</span></div></td><td><div class="icons"><svg class="i-access"><use href="#access"/></svg></div></td></tr>
      <tr><td>NC48</td><td><a>NC48 Parking Lot, Ann Arbor, MI 48109, USA</a></td><td>0.17</td><td>6am-5pm Mon-Fri</td><td><div class="tags"><span class="badge blue">Blue</span><span class="badge gold">Gold</span></div></td><td><div class="icons"><svg class="i-access"><use href="#access"/></svg></div></td></tr>
      <tr><td>NC60</td><td><a>NC60 Parking Lot, Ann Arbor, MI 48109, USA</a></td><td>0.17</td><td>6am-8pm Mon-Fri</td><td><div class="tags"><span class="badge blue">Blue</span><span class="badge gold">Gold</span></div></td><td><div class="icons"><svg class="i-access"><use href="#access"/></svg></div></td></tr>
      <tr><td>NC28</td><td><a>NC28 Parking Lot, Ann Arbor, MI 48109, USA</a></td><td>0.18</td><td>6am-5pm Mon-Fri</td><td><div class="tags"><span class="badge blue">Blue</span><span class="badge gold">Gold</span></div></td><td><div class="icons"><svg class="i-access"><use href="#access"/></svg><svg class="i-moto"><use href="#moto"/></svg></div></td></tr>
      <tr><td>NC22</td><td><a>NC22 Parking Lot, Ann Arbor, MI 48109, USA</a></td><td>0.2</td><td>6am-5pm Mon-Fri</td><td><div class="tags"><span class="badge blue">Blue</span><span class="badge gold">Gold</span></div></td><td><div class="icons"><svg class="i-access"><use href="#access"/></svg></div></td></tr>
      <tr><td>NC27</td><td><a>NC27 Parking Lot, Ann Arbor, MI 48109, USA</a></td><td>0.2</td><td>6am-8pm Mon-Sat</td><td><div class="tags"><span class="badge visitor">Visitor</span><span class="badge blue">Blue</span><span class="badge gold">Gold</span></div></td><td><div class="icons"><svg class="i-access"><use href="#access"/></svg><svg class="i-moto"><use href="#moto"/></svg><svg class="i-ev"><use href="#ev"/></svg></div></td></tr>
      <tr><td>NC45</td><td><a>42.29548449918087,<br>-83.71919708259574</a></td><td>0.2</td><td>6am-5pm Mon-Fri</td><td><div class="tags"><span class="badge blue">Blue</span><span class="badge gold">Gold</span></div></td><td><div class="icons"><svg class="i-access"><use href="#access"/></svg><svg class="i-moto"><use href="#moto"/></svg></div></td></tr>
      <tr><td>NC16</td><td><a>NC16 Parking Lot, Ann Arbor, MI 48109, USA</a></td><td>0.26</td><td>6am-5pm Mon-Fri</td><td><div class="tags"><span class="badge blue">Blue</span><span class="badge gold">Gold</span></div></td><td><div class="icons"><svg class="i-access"><use href="#access"/></svg><svg class="i-moto"><use href="#moto"/></svg></div></td></tr>
      <tr><td>NC81</td><td><a>42.29172733193706,<br>-83.70700160922361</a></td><td>0.32</td><td>6am-5pm Mon-Fri</td><td><div class="tags"><span class="badge yellow">Yellow</span><span class="badge blue">Blue</span><span class="badge gold">Gold</span></div></td><td><div class="icons"><svg class="i-access"><use href="#access"/></svg></div></td></tr>
    </tbody>
  </table>

  <nav class="pager"><a class="off">Previous</a><a class="current">1</a><a>2</a><a>Next</a></nav>
</main>
</body>
</html>
```
FILE: styles.css
```css
* { box-sizing: border-box; }
body { margin: 0; background: #fff; color: #333; font: 21px/30px "Liberation Sans", Arial, sans-serif; }
.defs { position: absolute; }
.page { width: 1536px; min-height: 2797px; margin-left: 121px; padding-top: 51px; }
h1 { margin: 0; height: 77px; font-size: 54px; font-weight: 400; line-height: 60px; border-bottom: 1px solid #e5e5e5; white-space: nowrap; }

.field, .length { display: flex; align-items: center; font-weight: 700; white-space: nowrap; }
.destination { height: 39px; margin-top: 30px; gap: 6px; }
.destination input { width: 655px; height: 39px; padding: 0 5px; border: 1px solid #767676; border-radius: 4px; font: inherit; color: inherit; outline: 0; }
.radius { height: 30px; margin-top: 7px; gap: 6px; }
.select { display: flex; align-items: center; justify-content: space-between; border: 1px solid #767676; border-radius: 4px; color: #333; }
.select svg path { fill: none; stroke: #333; stroke-width: 1.600; }
.select.small { width: 66px; height: 28px; padding: 0 6px; }

.legend { margin: 37px 0 0; height: 47px; padding-top: 1px; font-size: 31.500px; font-weight: 400; line-height: 45px; border-bottom: 1px solid #e5e5e5; }
.misc-title { margin-top: 32px; }
input[type=checkbox] { appearance: none; position: relative; width: 19px; height: 19px; margin: 0; border: 1.500px solid #767676; border-radius: 4px; background: #fff; flex: none; }
input[type=checkbox]:checked { background: #767676; }
input[type=checkbox]:checked::before { content: ""; position: absolute; left: 5px; top: 0; width: 6px; height: 12px; border: solid #fff; border-width: 0 3px 3px 0; transform: rotate(42deg); }

.permits { display: flex; margin-top: 30px; height: 39px; gap: 23.500px; font-weight: 700; }
.permits label { display: flex; gap: 4px; }
.permits input { margin-top: 7px; }
.badge { height: 38px; padding: 7px 7.400px; border-radius: 8px; color: #fff; font-weight: 700; line-height: 24px; text-shadow: 1.500px 1.500px 6px #000; }
.visitor { background: #ee1c25; }
.yellow { background: #ffcf0b; }
.orange { background: #ffa500; }
.blue { background: #002b5c; }
.gold { background: #d2b064; }
.housing { background: #26a9e0; }
.deselect { width: 135px; height: 39px; padding: 0; border: 1px solid #767676; border-radius: 4px; background: #efefef; color: #333; font: 20.500px/30px "Liberation Sans", Arial, sans-serif; white-space: nowrap; }

.misc { display: flex; align-items: flex-end; height: 51px; margin-top: 36px; gap: 29px; font-weight: 700; white-space: nowrap; }
.misc label { display: flex; align-items: flex-end; }
.misc input { margin: 0 7px 10px 0; }
.misc span { margin: 0 14px 2px 0; }
.misc .moto-opt span { margin-right: 8px; }
.misc .ev-opt { margin-left: -4px; }
.misc .ev-opt span { margin-right: 5px; }
.i-bus, .i-van { width: 45px; height: 36px; margin-bottom: 4px; flex: none; }
.i-access { width: 44px; height: 44px; margin-bottom: 4px; flex: none; }
.i-motob { width: 38px; height: 33px; margin-bottom: 9px; flex: none; }
.i-moto { width: 37px; height: 32px; flex: none; }
.i-ev { width: 44px; height: 51px; flex: none; }

.toggle { display: flex; align-items: center; justify-content: center; width: 100%; height: 51px; margin-top: 44px; padding: 1px 20px 0; border: 0; border-radius: 5px; background: #efefef; color: #333; font: 21px/30px "Liberation Sans", Arial, sans-serif; }
.toggle span { flex: 1; }
.toggle path { fill: none; stroke: #222; stroke-width: 4.500; }

/* map */
.map { position: relative; height: 768px; margin-top: 30px; overflow: hidden; font-family: Roboto, Arial, sans-serif; }
.canvas { display: block; width: 1536px; height: 768px; }
.land { fill: #f1f3f4; } .campus { fill: #e8eaed; } .yellow-land { fill: #fef5dc; }
.park { fill: #c3e5cb; } .park-d { fill: #a8dab5; } .pink { fill: #fce8e6; } .water { fill: #9cc0f9; }
.creek, .river, .rail, .path, .trail, .median, .lane { fill: none; stroke-linejoin: round; }
.creek { stroke: #9cc0f9; stroke-width: 5px; }
.river { stroke: #9cc0f9; stroke-width: 42px; } .river.thin { stroke-width: 22px; }
.rail { stroke: #d0d2d5; stroke-width: 3px; }
.path { stroke: #5bb974; stroke-width: 3px; } .path.dash { stroke-dasharray: 12 7; }
.trail { stroke: #c3e5cb; stroke-width: 7px; }
.median { stroke: #dcdee2; stroke-width: 4px; } .lane { stroke: #fff; stroke-width: 5px; }
#roads path { fill: none; stroke: var(--c); stroke-width: calc(var(--w) + var(--x)); stroke-linecap: round; stroke-linejoin: round; }
.casing { --c: #d9dbdf; --x: 6px; } .fill { --c: #fff; --x: 0px; }
.w1 { --w: 7px; } .w2 { --w: 12px; } .w3 { --w: 16px; } .w4 { --w: 25px; } .w5 { --w: 46px; }
#roads .plain { --x: 0px; --c: #fff; }
.lbl text, .riverlbl text { paint-order: stroke; stroke: #fff; stroke-width: 3.500px; stroke-linejoin: round; }
.poi { font-size: 20px; fill: #5a7480; }
.poi .orange { fill: #d9730d; } .poi .azure { fill: #1a73e8; } .poi .green { fill: #188038; } .poi .violet { fill: #5c6bc0; }
.poi .med { font-weight: 500; } .poi .it { font-style: italic; }
.area { font-size: 20px; font-weight: 500; fill: #55595e; }
.univ { font-size: 25px; font-weight: 500; fill: #4a7a8c; }
.road { font-size: 16px; fill: #70757a; } .major { font-size: 18px; font-weight: 500; fill: #4a4d51; }
.riverlbl { font-size: 18px; fill: #2a6bd8; } .riverlbl text { stroke: #9cc0f9; }
.slate { fill: #78909c; stroke: #5a7480; } .leaf { fill: #34a853; stroke: #1e8e3e; } .amber { fill: #f29900; stroke: #d9730d; }
.shop { fill: #4e8df5; stroke: #3b78e7; } .lot { fill: #7986cb; stroke: #5c6bc0; } .teal { fill: #12b5cb; stroke: #0f9bb0; }
.flags text { font-size: 22px; font-weight: 700; fill: #fff; text-anchor: middle; }
.logo { font: 600 31px "Open Sans", sans-serif; paint-order: stroke; stroke: #fff; stroke-width: 2px; }
.maptype { position: absolute; left: 15px; top: 15px; display: flex; height: 60px; background: #fff; border-radius: 3px; box-shadow: 0 1px 6px rgba(0,0,0,.3); font-size: 27px; line-height: 61px; color: #565656; text-align: center; }
.maptype span { width: 148px; } .maptype .on { width: 104px; color: #000; font-weight: 500; box-shadow: 1px 0 2px rgba(0,0,0,.15); }
.ctl { position: absolute; right: 15px; width: 60px; height: 60px; display: flex; align-items: center; justify-content: center; background: #fff; border-radius: 3px; box-shadow: 0 1px 6px rgba(0,0,0,.3); }
.full { top: 15px; } .full path { fill: none; stroke: #666; stroke-width: 4; }
.pegman { top: 503px; }
.zoom { top: 611px; height: 121px; flex-direction: column; } .zoom path { stroke: #666; stroke-width: 6; }
.zoom svg + svg { border-top: 1px solid #e6e6e6; width: 44px; }
.zoom svg + svg path { stroke-width: 7; }
.credits { position: absolute; right: 0; bottom: 0; display: flex; gap: 18px; height: 21px; padding: 0 9px 0 10px; background: rgba(245,245,245,.75); color: #000; font-size: 15px; line-height: 24px; white-space: nowrap; }

.length { height: 40px; margin-top: 30px; padding-top: 1px; gap: 6px; }
.select.big { width: 84px; height: 41px; padding: 0 6px 0 13px; border-color: #aaa; border-radius: 5px; }

table { width: 1536px; margin-top: 8px; border: 1px solid #ddd; border-bottom-color: #aaa; border-collapse: separate; border-spacing: 0; table-layout: fixed; }
.c1 { width: 93px; } .c2 { width: 410px; } .c3 { width: 247px; } .c4 { width: 174px; } .c5 { width: 249px; } .c6 { width: 361px; }
th, td { padding: 13px 12px 11px 13px; border: 1px solid #ddd; text-align: left; }
th { position: relative; height: 182px; border-top: 0; border-bottom-width: 3px; vertical-align: bottom; }
th:last-child { padding-right: 30px; }
td { height: 91.300px; vertical-align: top; padding-bottom: 0; }
td:nth-child(2) { padding-right: 6px; } td:nth-child(5) { padding-right: 0; }
td a { color: #337ab7; }
.sort { position: absolute; right: 17px; top: 77px; width: 12px; height: 26px; fill: #ddd; }
.sort.asc { --up: #808080; }
.up { fill: var(--up, #ddd); }
.tags { display: flex; gap: 6px; margin: -5px 0 0 3px; }
.key { display: flex; align-items: flex-end; height: 65px; padding: 0 0 8px 8px; }
.key i { width: 23px; margin-bottom: 3px; font-style: normal; text-align: center; }
.key i:nth-of-type(3) { width: 18px; padding-left: 6px; } .key i:nth-of-type(4) { width: 9px; text-align: left; padding-left: 2px; }
.icons { display: flex; height: 60px; padding-left: 8px; }
.icons .i-access { margin: 9px 13px 0 0; } .icons .i-moto { margin: 17px 4px 0 0; } .icons .i-ev { margin-top: 6px; }

.pager { display: flex; justify-content: flex-end; margin-top: 5px; height: 54px; line-height: 53px; }
.pager a { padding: 0 22px; border: 1px solid transparent; }
.pager a + a { margin-left: 2px; }
.pager .off { color: #666; }
.pager .current { border-color: #979797; border-radius: 3px; background: linear-gradient(#fff, #dcdcdc); }
```
